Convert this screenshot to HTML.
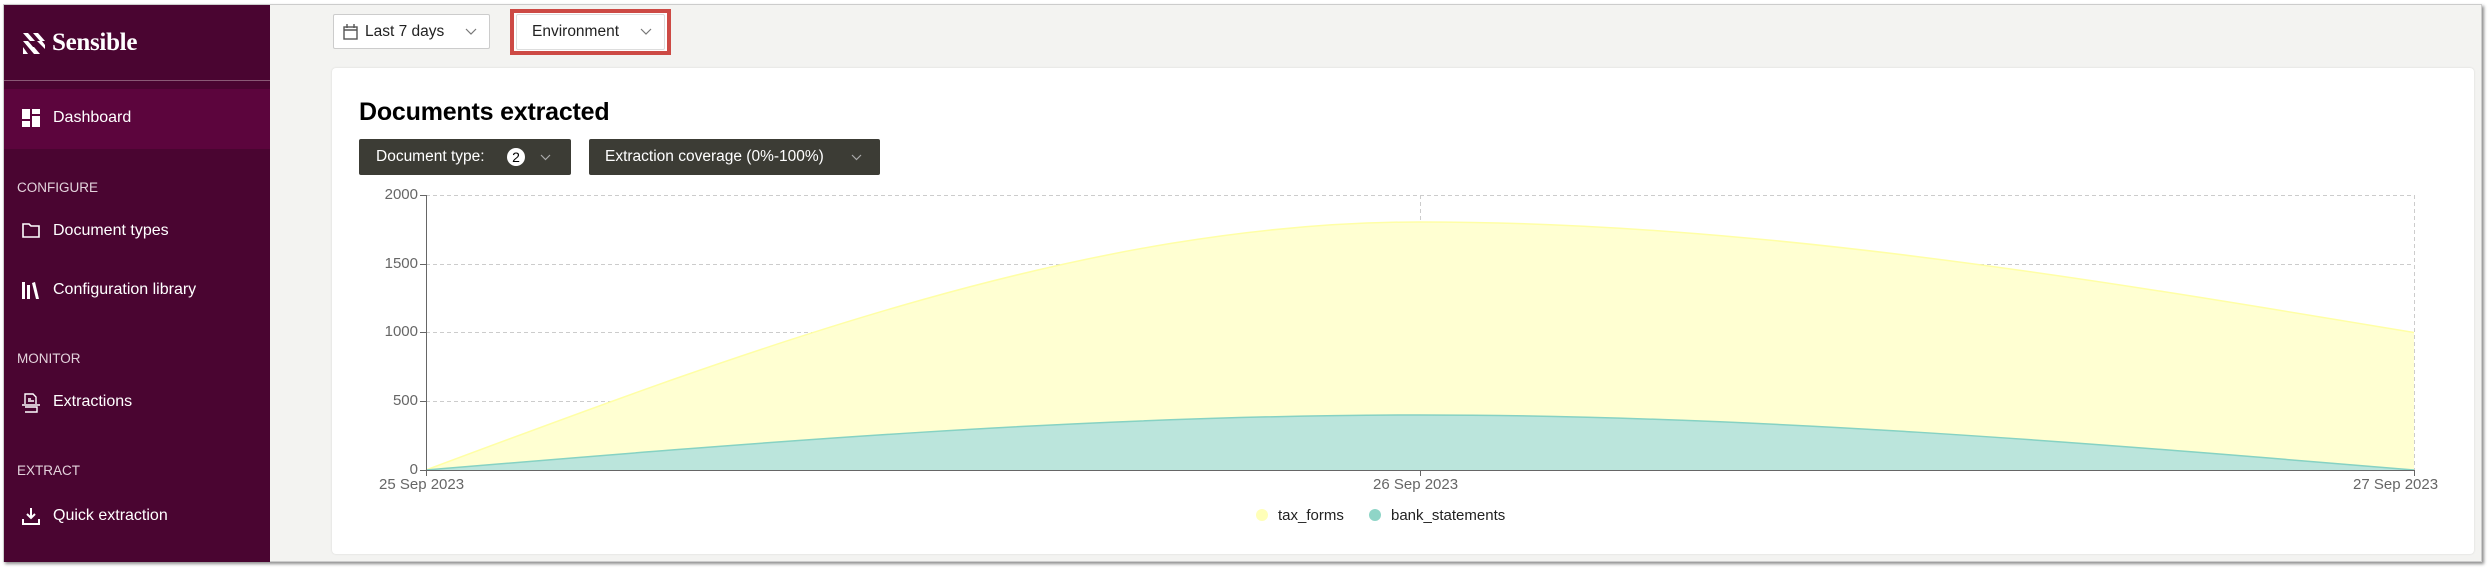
<!DOCTYPE html>
<html><head><meta charset="utf-8"><style>
*{margin:0;padding:0;box-sizing:border-box}
body{width:2490px;height:570px;background:#fff;font-family:"Liberation Sans",sans-serif;position:relative;overflow:hidden}
.frame{position:absolute;left:3px;top:4px;width:2479px;height:558px;background:#f3f3f1;box-shadow:2px 2px 3px rgba(0,0,0,.45);border:1px solid #ccc}
.side{position:absolute;left:4px;top:5px;width:266px;height:557px;background:#4a0531;color:#fff}
.abs{position:absolute}
.nav{position:absolute;left:49px;font-size:16px;color:#fff}
.sec{position:absolute;left:13px;font-size:13.5px;color:#e3d3dc}
.btn{position:absolute;background:#fff;border:1px solid #ccc;border-radius:2px;font-size:15.5px;color:#222}
.card{position:absolute;left:332px;top:68px;width:2142px;height:486px;background:#fff;border-radius:4px;box-shadow:0 0 2px rgba(0,0,0,.12)}
.dk{position:absolute;top:139px;height:36px;background:#3c3c35;border-radius:2px;color:#fff;font-size:15.5px;line-height:36px}
.yl{position:absolute;width:60px;text-align:right;font-size:15px;color:#666}
.xl{position:absolute;font-size:15px;color:#666}
.chev{position:absolute}
</style></head><body>
<div class="frame"></div>
<div class="side">
  <svg class="abs" style="left:19px;top:28px" width="22" height="22" viewBox="0 0 22 22"><g fill="#fff"><path d="M0 0h5l7 8h-5z"/><path d="M0 8h5l11 13h-5z"/><path d="M10 0h5l7 8h-5z"/><path d="M6 14h5l6 7h-5z"/><path d="M14 8h5l3 4v4z"/><path d="M0 14l5 7H0z"/></g></svg>
  <div class="abs" style="left:48px;top:24px;font-family:'Liberation Serif',serif;font-weight:bold;font-size:25px;letter-spacing:-.3px">Sensible</div>
  <div class="abs" style="left:0;top:75px;width:266px;height:1px;background:#8a5a76"></div>
  <div class="abs" style="left:0;top:84px;width:266px;height:60px;background:#5c053d"></div>
  <svg class="abs" style="left:18px;top:104px" width="18" height="18" viewBox="0 0 18 18" fill="#fff"><rect x="0" y="0" width="8" height="10"/><rect x="10" y="0" width="8" height="5"/><rect x="10" y="7" width="8" height="11"/><rect x="0" y="12" width="8" height="6"/></svg>
  <div class="nav" style="top:104px">Dashboard</div>
  <div class="sec" style="top:175px">CONFIGURE</div>
  <svg class="abs" style="left:18px;top:217px" width="18" height="16" viewBox="0 0 18 16" fill="none" stroke="#fff" stroke-width="1.6"><path d="M1 2h6l2 2h8v11H1z"/></svg>
  <div class="nav" style="top:217px">Document types</div>
  <svg class="abs" style="left:18px;top:276px" width="18" height="18" viewBox="0 0 18 18" fill="#fff"><rect x="0" y="1" width="3" height="17"/><rect x="5" y="4" width="3" height="14"/><path d="M10 2l3-1 4 17h-3z"/></svg>
  <div class="nav" style="top:276px">Configuration library</div>
  <div class="sec" style="top:346px">MONITOR</div>
  <svg class="abs" style="left:18px;top:388px" width="18" height="20" viewBox="0 0 18 20" fill="none" stroke="#fff" stroke-width="1.4"><path d="M3 11V1h8l3 3v7M0 12h18M3 14h12v5H3"/><path d="M6 6h3M6 8h6"/></svg>
  <div class="nav" style="top:388px">Extractions</div>
  <div class="sec" style="top:458px">EXTRACT</div>
  <svg class="abs" style="left:18px;top:502px" width="18" height="18" viewBox="0 0 18 18" fill="none" stroke="#fff" stroke-width="2"><path d="M9 1v10M5 7l4 4 4-4M1 12v5h16v-5"/></svg>
  <div class="nav" style="top:502px">Quick extraction</div>
</div>
<div class="btn" style="left:333px;top:14px;width:157px;height:35px">
  <svg class="abs" style="left:9px;top:9px" width="15" height="16" viewBox="0 0 15 16" fill="none" stroke="#555" stroke-width="1.4"><rect x="1" y="3" width="13" height="12"/><path d="M1 6h13M4 0v4M11 0v4"/></svg>
  <span class="abs" style="left:31px;top:8px">Last 7 days</span>
  <svg class="chev" style="left:131px;top:13px" width="12" height="8" viewBox="0 0 12 8" fill="none" stroke="#777" stroke-width="1.2"><path d="M1 1l5 5 5-5"/></svg>
</div>
<div class="abs" style="left:510px;top:9px;width:161px;height:46px;border:4px solid #cd4a45;background:#fff"></div>
<div class="btn" style="left:516px;top:14px;width:149px;height:36px;border-color:#ddd">
  <span class="abs" style="left:15px;top:8px">Environment</span>
  <svg class="chev" style="left:123px;top:13px" width="12" height="8" viewBox="0 0 12 8" fill="none" stroke="#777" stroke-width="1.2"><path d="M1 1l5 5 5-5"/></svg>
</div>
<div class="card"></div>
<div class="abs" style="left:359px;top:98px;font-size:25px;font-weight:bold;color:#000;letter-spacing:-.2px">Documents extracted</div>
<div class="dk" style="left:359px;width:212px"><span style="position:absolute;left:17px">Document type:</span><span style="position:absolute;left:148px;top:9px;width:18px;height:18px;border-radius:9px;background:#fff;color:#000;line-height:18px;text-align:center;font-size:14px">2</span><svg style="position:absolute;left:181px;top:15px" width="11" height="7" viewBox="0 0 11 7" fill="none" stroke="#aaa" stroke-width="1.2"><path d="M1 1l4.5 4.5L10 1"/></svg></div>
<div class="dk" style="left:589px;width:291px"><span style="position:absolute;left:16px">Extraction coverage (0%-100%)</span><svg style="position:absolute;left:262px;top:15px" width="11" height="7" viewBox="0 0 11 7" fill="none" stroke="#aaa" stroke-width="1.2"><path d="M1 1l4.5 4.5L10 1"/></svg></div>
<svg class="abs" style="left:0;top:0" width="2490" height="570">
  <g stroke="#ccc" stroke-dasharray="4 3" stroke-width="1" fill="none">
    <path d="M426 195.5H2414M426 264.5H2414M426 332.5H2414M426 401.5H2414"/>
    <path d="M1420.5 195V470M2414.5 195V470"/>
  </g>
  <path d="M426 470C757.3 346.1 1088.7 222 1420 222C1751.3 222 2082.7 277.3 2414 332.5V470H426Z" fill="#ffffd2"/>
  <path d="M426 470C757.3 346.1 1088.7 222 1420 222C1751.3 222 2082.7 277.3 2414 332.5" fill="none" stroke="#ffffa6" stroke-width="1.5"/>
  <path d="M426 470C757.3 442.5 1088.7 415 1420 415C1751.3 415 2082.7 442.5 2414 470Z" fill="#bbe5dc"/>
  <path d="M426 470C757.3 442.5 1088.7 415 1420 415C1751.3 415 2082.7 442.5 2414 470" fill="none" stroke="#86d2c3" stroke-width="1.5"/>
  <g stroke="#666" stroke-width="1" fill="none">
    <path d="M426.5 195V476M426 470.5H2414M420 195.5h6M420 264.5h6M420 332.5h6M420 401.5h6M420 470.5h6M1420.5 470v6M2414.5 470v6"/>
  </g>
  <circle cx="1262" cy="515" r="6" fill="#ffffb8"/>
  <circle cx="1375" cy="515" r="6" fill="#8fd5c7"/>
</svg>
<div class="yl" style="left:358px;top:186px">2000</div>
<div class="yl" style="left:358px;top:255px">1500</div>
<div class="yl" style="left:358px;top:323px">1000</div>
<div class="yl" style="left:358px;top:392px">500</div>
<div class="yl" style="left:358px;top:461px">0</div>
<div class="xl" style="left:379px;top:476px">25 Sep 2023</div>
<div class="xl" style="left:1373px;top:476px">26 Sep 2023</div>
<div class="xl" style="left:2353px;top:476px">27 Sep 2023</div>
<div class="abs" style="left:1278px;top:507px;font-size:15px;color:#222">tax_forms</div>
<div class="abs" style="left:1391px;top:507px;font-size:15px;color:#222">bank_statements</div>
</body></html>
